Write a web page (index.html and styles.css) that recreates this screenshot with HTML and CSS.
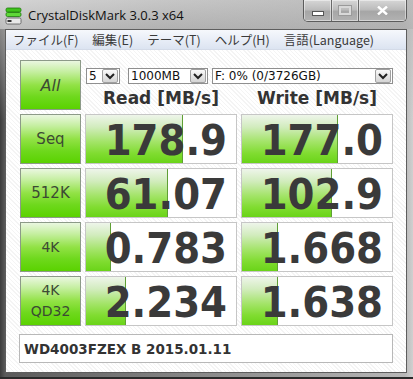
FILE: index.html
```html
<!DOCTYPE html>
<html>
<head>
<meta name="viewport" content="width=device-width, initial-scale=1.0">
<link rel="stylesheet" href="styles.css">
<title>CrystalDiskMark 3.0.3 x64</title>
</head>
<body>
<div class="window">
  <div class="titlebar">
    <svg class="appicon" width="18" height="18" viewBox="0 0 18 18">
      <rect x="1" y="1" width="15" height="4" rx="1.5" fill="#3fc21a" stroke="#1d7a0a" stroke-width="0.8"/>
      <rect x="1" y="5.5" width="15" height="4" rx="1.5" fill="#5fd838" stroke="#1d7a0a" stroke-width="0.8"/>
      <rect x="1" y="11" width="15" height="6" rx="1.5" fill="#e8e8e8" stroke="#555" stroke-width="0.8"/>
      <rect x="2.5" y="13" width="4" height="2" fill="#333"/>
    </svg>
    <span class="title">CrystalDiskMark 3.0.3 x64</span>
    <div class="caption">
      <div class="cbtn min"><span class="minbar"></span></div>
      <div class="cbtn max"><span class="maxbox"></span></div>
      <div class="cbtn close">
        <svg width="11" height="9" viewBox="0 0 11 9"><path d="M1 0.5 L10 8.5 M10 0.5 L1 8.5" stroke="#fff" stroke-width="2.4"/></svg>
      </div>
    </div>
  </div>
  <div class="client">
    <div class="menu">
      <span>ファイル(F)</span>
      <span>編集(E)</span>
      <span>テーマ(T)</span>
      <span>ヘルプ(H)</span>
      <span>言語(Language)</span>
    </div>
    <div class="content">
      <div class="grid">
        <div class="btn all">All</div>
        <div class="top">
          <div class="selects">
            <div class="sel s1"><span class="seltext">5</span><span class="arrow"><svg width="10" height="7" viewBox="0 0 10 7"><path d="M1 1 L5 5 L9 1" fill="none" stroke="#222" stroke-width="2"/></svg></span></div>
            <div class="sel s2"><span class="seltext">1000MB</span><span class="arrow"><svg width="10" height="7" viewBox="0 0 10 7"><path d="M1 1 L5 5 L9 1" fill="none" stroke="#222" stroke-width="2"/></svg></span></div>
            <div class="sel s3"><span class="seltext">F: 0% (0/3726GB)</span><span class="arrow"><svg width="10" height="7" viewBox="0 0 10 7"><path d="M1 1 L5 5 L9 1" fill="none" stroke="#222" stroke-width="2"/></svg></span></div>
          </div>
          <div class="heads">
            <div class="head">Read [MB/s]</div>
            <div class="head">Write [MB/s]</div>
          </div>
        </div>

        <div class="btn">Seq</div>
        <div class="val"><div class="bar" style="width:97px"></div><span class="num">178.9</span></div>
        <div class="val"><div class="bar" style="width:96px"></div><span class="num">177.0</span></div>

        <div class="btn">512K</div>
        <div class="val"><div class="bar" style="width:82px"></div><span class="num">61.07</span></div>
        <div class="val"><div class="bar" style="width:90px"></div><span class="num">102.9</span></div>

        <div class="btn small">4K</div>
        <div class="val"><div class="bar" style="width:25px"></div><span class="num">0.783</span></div>
        <div class="val"><div class="bar" style="width:36px"></div><span class="num">1.668</span></div>

        <div class="btn small two">4K<br>QD32</div>
        <div class="val"><div class="bar" style="width:40px"></div><span class="num">2.234</span></div>
        <div class="val"><div class="bar" style="width:36px"></div><span class="num">1.638</span></div>
      </div>
      <div class="footer">WD4003FZEX B 2015.01.11</div>
    </div>
  </div>
</div>
</body>
</html>
```

FILE: styles.css
```css
html, body {
  margin: 0;
  padding: 0;
}
body {
  width: 413px;
  height: 379px;
  overflow: hidden;
  background: #9a9a9a;
}
.window {
  box-sizing: border-box;
  width: 413px;
  height: 379px;
  padding: 0 6px 6px 5px;
  background:
    linear-gradient(to bottom, rgba(200,200,200,0.9) 0, rgba(185,185,185,0.6) 30px, rgba(0,0,0,0) 120px),
    linear-gradient(to right, #3c3c3c 0, #5a5a5a 5px, #8a8a8a 50%, #b8b8b8 98%, #d0d0d0 100%);
  border-bottom: 2px solid #2a2a2a;
}
.titlebar {
  height: 29px;
  display: flex;
  align-items: flex-start;
  background: linear-gradient(to right, rgba(235,235,235,0.5) 0, rgba(210,210,210,0.3) 40%, rgba(140,140,140,0.2) 100%);
  margin: 0 -6px 0 -5px;
  padding: 0 6px 0 5px;
}
.appicon {
  margin-top: 7px;
  margin-left: 0;
}
.title {
  font-family: "Open Sans", "Noto Sans", sans-serif;
  font-size: 13px;
  color: #111;
  margin-left: 5px;
  margin-top: 6px;
  line-height: 18px;
}
.caption {
  margin-left: auto;
  display: flex;
  height: 21px;
  border: 1px solid #5c5c5c;
  border-top: none;
  border-radius: 0 0 5px 5px;
  overflow: hidden;
}
.cbtn {
  height: 21px;
  display: flex;
  align-items: center;
  justify-content: center;
  background: linear-gradient(to bottom, #d6d6d6 0, #bcbcbc 45%, #a6a6a6 55%, #b2b2b2 100%);
  box-shadow: inset 0 0 0 1px rgba(255,255,255,0.45);
}
.min { width: 27px; border-right: 1px solid #6a6a6a; }
.max { width: 26px; border-right: 1px solid #6a6a6a; }
.close { width: 47px; }
.minbar {
  display: block;
  width: 10px;
  height: 3px;
  margin-top: 5px;
  background: #fff;
  border: 1px solid #555;
}
.maxbox {
  display: block;
  width: 8px;
  height: 5px;
  border: 2px solid #d8d8d8;
  outline: 1px solid #9a9a9a;
}
.client {
  box-sizing: border-box;
  height: 344px;
  border: 1px solid #5e5e5e;
  background: #fff;
  display: flex;
  flex-direction: column;
}
.menu {
  height: 20px;
  box-sizing: border-box;
  display: flex;
  align-items: center;
  gap: 14px;
  padding-left: 7px;
  background: linear-gradient(to bottom, #f6f8fc 0, #e9eef7 50%, #dce4f1 100%);
  border-bottom: 1px solid #d4dbe8;
  font-family: "Noto Sans CJK JP", "Noto Sans", sans-serif;
  font-size: 12.5px;
  color: #3a3a3a;
}
.content {
  flex: 1;
  padding: 10px 0 0 14px;
  background: repeating-linear-gradient(45deg, #ffffff 0, #ffffff 2px, #f4f4f4 2px, #f4f4f4 3px);
}
.grid {
  display: grid;
  grid-template-columns: 61px 152px 152px;
  grid-auto-rows: 50px;
  gap: 4px;
}
.btn {
  box-sizing: border-box;
  border: 1px solid #8c9a88;
  background: linear-gradient(to bottom, #eaf7e0 0, #c6efa2 22%, #92e246 50%, #6ed81c 75%, #5ad200 100%);
  display: flex;
  align-items: center;
  justify-content: center;
  text-align: center;
  font-family: "DejaVu Sans", sans-serif;
  font-size: 15px;
  color: #3c4a34;
}
.btn.all {
  font-size: 16px;
  font-style: italic;
}
.btn.small {
  font-size: 14px;
}
.btn.two {
  line-height: 21px;
}
.top {
  grid-column: 2 / 4;
  display: flex;
  flex-direction: column;
}
.selects {
  display: flex;
  margin-top: 8px;
  margin-left: 1px;
  height: 16px;
}
.sel {
  box-sizing: border-box;
  height: 16px;
  border: 1px solid #8f8f8f;
  background: #fff;
  display: flex;
  align-items: center;
  justify-content: space-between;
  font-family: "DejaVu Sans", sans-serif;
  font-size: 12px;
  color: #111;
}
.s1 { width: 34px; margin-right: 8px; }
.s2 { width: 80px; margin-right: 4px; }
.s3 { width: 181px; }
.seltext {
  padding-left: 2px;
  line-height: 14px;
}
.arrow {
  box-sizing: border-box;
  width: 16px;
  height: 14px;
  margin-right: 1px;
  border: 1px solid #a0a0a0;
  border-radius: 2px;
  background: linear-gradient(to bottom, #fafafa 0, #e6e6e6 50%, #d4d4d4 100%);
  display: flex;
  align-items: center;
  justify-content: center;
}
.heads {
  display: flex;
  gap: 4px;
  margin-top: 4px;
}
.head {
  width: 152px;
  text-align: center;
  font-family: "DejaVu Sans", sans-serif;
  font-weight: bold;
  font-size: 17px;
  line-height: 20px;
  color: #333;
}
.val {
  box-sizing: border-box;
  border: 1px solid #c6c6c6;
  background: #fff;
  display: grid;
  grid-template: 1fr / 1fr;
}
.bar {
  grid-area: 1 / 1;
  justify-self: start;
  box-sizing: border-box;
  border-right: 1px solid #5f9f35;
  background: linear-gradient(to bottom, #eef5ea 0, #d2ecbe 25%, #a4e46a 55%, #80dc30 80%, #6ad418 100%);
}
.num {
  grid-area: 1 / 1;
  justify-self: end;
  align-self: center;
  padding-right: 9px;
  font-family: "DejaVu Sans Condensed", "DejaVu Sans", sans-serif;
  font-stretch: condensed;
  font-weight: bold;
  font-size: 43px;
  line-height: 1;
  color: #3a3a3a;
  margin-top: 2px;
}
.footer {
  box-sizing: border-box;
  width: 374px;
  height: 29px;
  margin-top: 8px;
  margin-left: -1px;
  border: 1px solid #b8b8b8;
  background: #fff;
  display: flex;
  align-items: center;
  padding-left: 4px;
  font-family: "DejaVu Sans", sans-serif;
  font-weight: bold;
  font-size: 13.5px;
  color: #333;
}
```
